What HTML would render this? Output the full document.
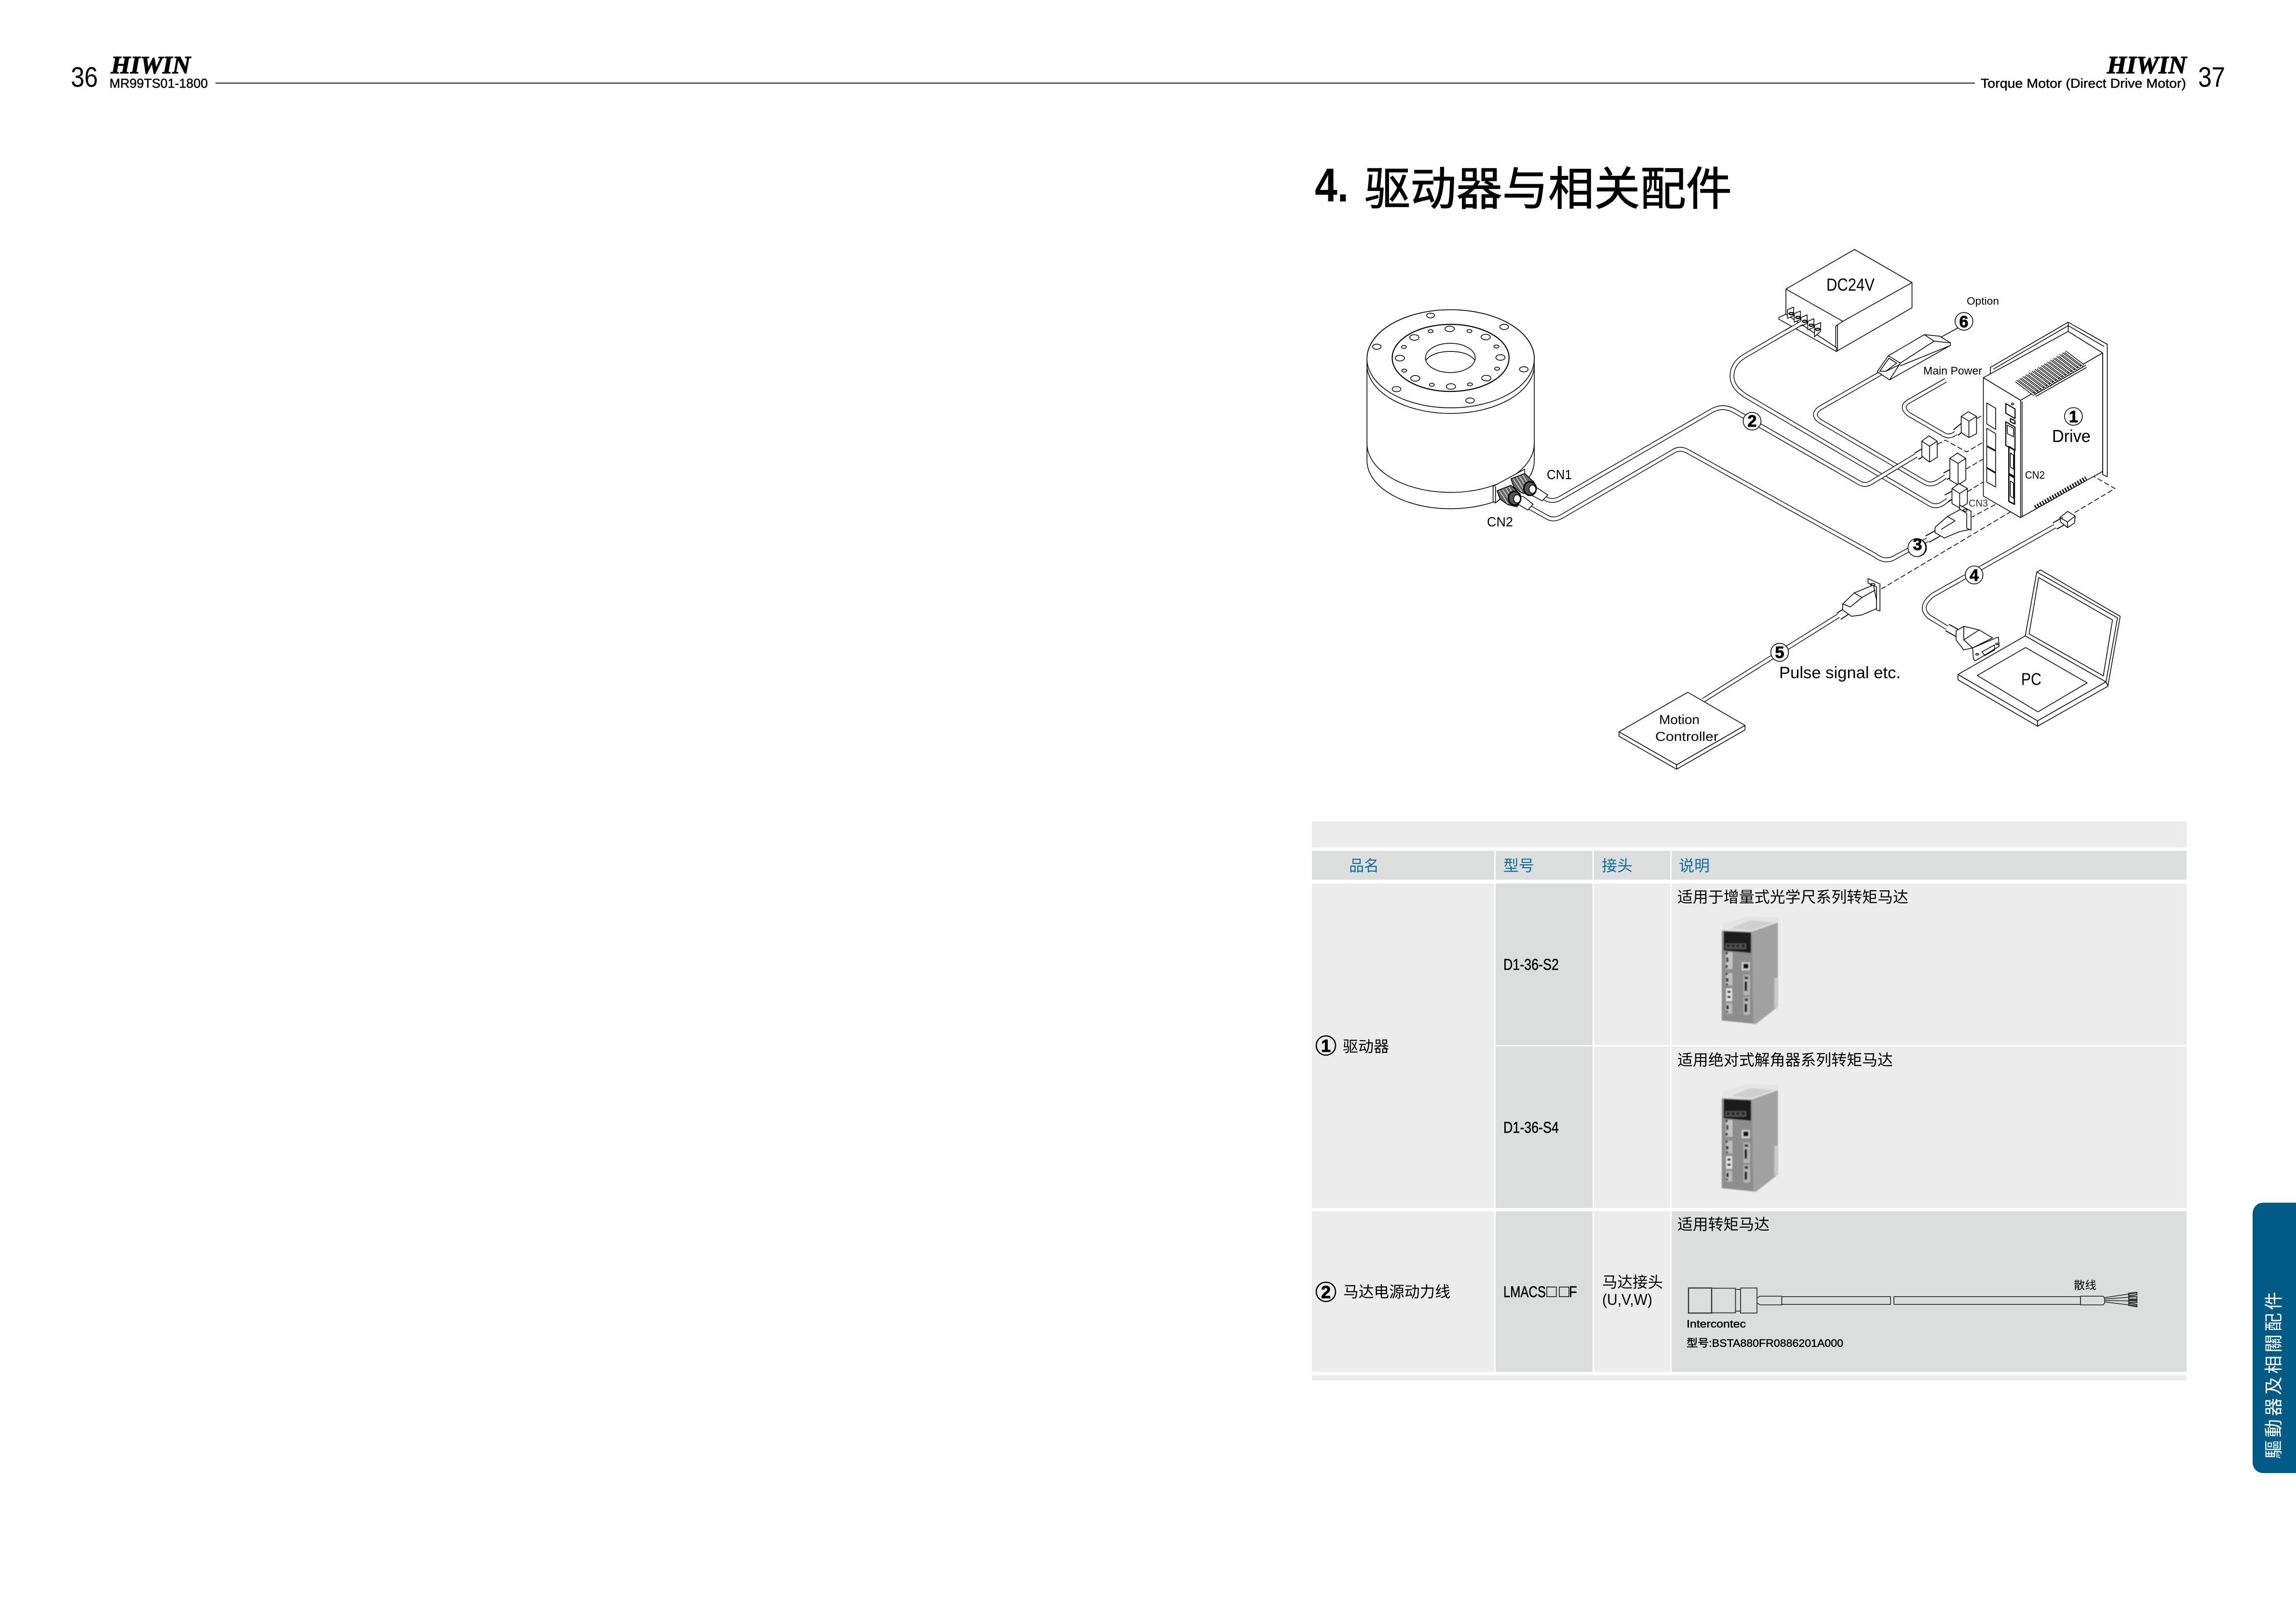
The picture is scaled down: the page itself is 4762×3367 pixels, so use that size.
<!DOCTYPE html>
<html lang="zh"><head><meta charset="utf-8"><title>HIWIN Torque Motor</title>
<style>
html,body{margin:0;padding:0;background:#fff;width:4762px;height:3367px;overflow:hidden}
svg{display:block}
text{font-family:"Liberation Sans","Noto Sans CJK SC",sans-serif;fill:#000}
.n,.v *{vector-effect:non-scaling-stroke}
.v{fill:none;stroke:#000;stroke-width:1.6;stroke-linejoin:round}
.w{fill:#fff}
.m{stroke:#000;stroke-width:.5}
.num{font-weight:700;text-anchor:middle;stroke:#000;stroke-width:1}
.logo{font-family:"Liberation Serif",serif;font-weight:700;font-style:italic;stroke:#000;stroke-width:1.3}
</style></head><body>
<svg xmlns="http://www.w3.org/2000/svg" width="4762" height="3367" viewBox="0 0 4762 3367">
<defs>
<filter id="b" x="-5%" y="-5%" width="110%" height="110%"><feGaussianBlur stdDeviation="3"/></filter>
<path id="cA" class="n" d="M790,1240 Q815,1262 843,1238 L1335,832 Q1370,805 1408,835 L1809,1165 Q1832,1187 1854,1165 L1999,1040"/>
<path id="cB" class="n" d="M735,1278 L800,1330 Q820,1345 845,1325 L1205,1025 Q1230,1000 1258,1025 L1864,1505 Q1899,1545 1935,1510 L2050,1422"/>
<path id="cC" class="n" d="M1619,430 L1439,580 Q1399,615 1399,672 Q1399,725 1444,765 L2039,1265 Q2062,1285 2084,1265 L2114,1235"/>
<path id="cD" class="n" d="M1894,650 L1684,822 Q1654,855 1689,885 L2024,1165 Q2044,1182 2066,1165 L2099,1135"/>
<path id="cM" class="n" d="M2094,692 L1974,790 Q1944,815 1974,850 L2089,945 Q2106,958 2124,940 L2149,915"/>
<path id="c4" class="n" d="M1335,218 L1015,565 Q975,625 1005,675 L1065,745"/>
<path id="c5" class="n" d="M785,650 L417,1092"/>
<path id="fins" class="n" d="M1068,695l60,65M1078,686.5l60,65M1088,678l60,65M1098,669.5l60,65M1108,661l60,65M1118,652.5l60,65M1128,644l60,65M1138,635.5l60,65M1148,627l60,65M1158,618.5l60,65M1168,610l60,65M1178,601.5l60,65M1188,593l60,65M1198,584.5l60,65M1208,576l60,65M1218,567.5l60,65M1228,559l60,65"/>
<g id="photo" transform="translate(3450,2150) scale(.3333)">
 <g filter="url(#b)">
 <polygon points="372,345 520,295 715,305 712,345 548,395 365,385" fill="#e4e4e4"/>
 <polygon points="420,372 540,322 690,335 545,385" fill="#cfcfcf"/>
 <polygon points="548,393 712,335 712,860 575,968 555,965" fill="#a2a2a2"/>
 <polygon points="690,680 710,680 710,860 690,870" fill="#c9c9c9"/>
 <polygon points="363,385 550,393 560,965 363,945" fill="#8d8d8d"/>
 <polygon points="375,390 545,398 545,525 375,510" fill="#1d1d1d"/>
 <rect x="385" y="465" width="130" height="35" fill="#555"/>
 <rect x="395" y="472" width="18" height="18" fill="#222"/><rect x="425" y="472" width="18" height="18" fill="#222"/><rect x="455" y="472" width="18" height="18" fill="#222"/><rect x="487" y="472" width="18" height="18" fill="#222"/>
 <rect x="388" y="520" width="42" height="105" fill="#c4c4c4"/><rect x="392" y="552" width="12" height="30" fill="#222"/><rect x="388" y="520" width="12" height="14" fill="#222"/><rect x="388" y="600" width="12" height="18" fill="#222"/>
 <rect x="388" y="650" width="42" height="78" fill="#bdbdbd"/><rect x="390" y="682" width="14" height="22" fill="#222"/><rect x="388" y="650" width="12" height="12" fill="#222"/><rect x="390" y="715" width="12" height="12" fill="#222"/>
 <rect x="390" y="745" width="38" height="80" fill="#e2e2e2"/><rect x="398" y="760" width="20" height="14" fill="#333"/><rect x="398" y="792" width="20" height="14" fill="#333"/>
 <rect x="388" y="838" width="40" height="65" fill="#bdbdbd"/><rect x="392" y="850" width="14" height="26" fill="#222"/><rect x="390" y="885" width="12" height="12" fill="#222"/>
 <rect x="487" y="583" width="50" height="50" fill="#d5d5d5"/><rect x="497" y="592" width="32" height="30" fill="#111"/>
 <rect x="498" y="662" width="40" height="125" fill="#b5b5b5"/><rect x="505" y="702" width="16" height="60" fill="#222"/><rect x="505" y="672" width="22" height="16" fill="#333"/>
 <rect x="498" y="800" width="40" height="110" fill="#b5b5b5"/><rect x="505" y="842" width="16" height="50" fill="#222"/><rect x="505" y="808" width="22" height="16" fill="#333"/>
 </g>
</g>
</defs>

<!-- page header -->
<text x="147" y="180" font-size="58" textLength="56" lengthAdjust="spacingAndGlyphs">36</text>
<text class="logo" x="230" y="152" font-size="52" textLength="165" lengthAdjust="spacingAndGlyphs">HIWIN</text>
<text class="m" x="227" y="182" font-size="27" textLength="204" lengthAdjust="spacingAndGlyphs">MR99TS01-1800</text>
<rect x="447" y="171" width="3649" height="3" fill="#5e5e5e"/>
<text class="m" x="4108" y="182" font-size="27" textLength="426" lengthAdjust="spacingAndGlyphs">Torque Motor (Direct Drive Motor)</text>
<text class="logo" x="4370" y="152" font-size="52" textLength="165" lengthAdjust="spacingAndGlyphs">HIWIN</text>
<text x="4559" y="180" font-size="58" textLength="56" lengthAdjust="spacingAndGlyphs">37</text>

<!-- title -->
<text x="2727" y="418" font-size="98" font-weight="700" textLength="70" lengthAdjust="spacingAndGlyphs">4.</text>
<text x="2830" y="425" font-size="95" textLength="762" lengthAdjust="spacingAndGlyphs" stroke="#000" stroke-width="1.2">驱动器与相关配件</text>

<!-- diagram -->
<g class="v" transform="translate(2700,480) scale(.63776,.44643)">
 <!-- motor -->
 <path class="w" d="M212,590 V1065 A272,224 0 0 0 756,1065 V590 A272,226 0 0 0 212,590Z"/>
 <ellipse cx="484" cy="592" rx="272" ry="228"/>
 <path d="M212,620 A272,226 0 0 0 756,620 M212,985 A272,228 0 0 0 756,985"/>
 <ellipse cx="484" cy="588" rx="190" ry="156" stroke-width="2.2"/>
 <ellipse cx="483" cy="588" rx="81" ry="68"/>
 <path d="M402,600 C420,570 450,558 483,558 C520,558 548,572 564,600"/>
 <ellipse cx="419" cy="391" rx="13" ry="11"/><ellipse cx="658" cy="444" rx="14" ry="12"/><ellipse cx="244" cy="536" rx="14" ry="12"/><ellipse cx="722" cy="641" rx="14" ry="12"/><ellipse cx="308" cy="733" rx="14" ry="12"/><ellipse cx="547" cy="786" rx="14" ry="12"/>
 <ellipse cx="481" cy="453" rx="15" ry="13"/><ellipse cx="366" cy="493" rx="15" ry="13"/><ellipse cx="598" cy="491" rx="15" ry="13"/><ellipse cx="319" cy="589" rx="15" ry="13"/><ellipse cx="646" cy="586" rx="15" ry="13"/><ellipse cx="369" cy="683" rx="15" ry="13"/><ellipse cx="600" cy="682" rx="15" ry="13"/><ellipse cx="485" cy="721" rx="15" ry="13"/>
 <ellipse cx="419" cy="464" rx="8" ry="7"/><ellipse cx="545" cy="463" rx="8" ry="7"/><ellipse cx="332" cy="537" rx="8" ry="7"/><ellipse cx="633" cy="535" rx="8" ry="7"/><ellipse cx="333" cy="647" rx="8" ry="7"/><ellipse cx="635" cy="638" rx="8" ry="7"/><ellipse cx="423" cy="713" rx="8" ry="7"/><ellipse cx="547" cy="711" rx="8" ry="7"/>

 <!-- cables -->
 <use href="#cB" stroke-width="9.5"/><use href="#cB" stroke="#fff" stroke-width="6.6"/>
 <use href="#cD" stroke-width="9.5"/><use href="#cD" stroke="#fff" stroke-width="6.6"/>
 <use href="#cC" stroke-width="9.5"/><use href="#cC" stroke="#fff" stroke-width="6.6"/>
 <use href="#cM" stroke-width="9.5"/><use href="#cM" stroke="#fff" stroke-width="6.6"/>
 <use href="#cA" stroke-width="9.5"/><use href="#cA" stroke="#fff" stroke-width="6.6"/>

 <!-- motor connectors -->
 <path class="w" d="M622,1185 L725,1105 V1130 L680,1200 L630,1262 L622,1255Z"/>
 <path d="M630,1185 V1262"/>
 <polygon fill="#666" points="680,1150 725,1125 755,1165 760,1195 745,1225 715,1215 690,1190"/>
 <path stroke="#ddd" stroke-width="1.6" d="M688,1150 L716,1212 M698,1144 L726,1207 M708,1138 L736,1202 M718,1132 L746,1196"/>
 <polygon class="w" points="750,1192 765,1192 800,1225 782,1252 745,1225"/>
 <ellipse fill="#555" cx="742" cy="1195" rx="20" ry="32" stroke-width="3"/>
 <ellipse class="w" cx="750" cy="1198" rx="11" ry="19"/>
 <polygon fill="#666" points="635,1205 680,1180 710,1220 715,1250 700,1280 670,1270 645,1245"/>
 <path stroke="#ddd" stroke-width="1.6" d="M643,1205 L671,1267 M653,1199 L681,1262 M663,1193 L691,1257 M673,1187 L701,1251"/>
 <polygon class="w" points="705,1232 720,1232 752,1268 735,1295 700,1265"/>
 <ellipse fill="#555" cx="692" cy="1240" rx="20" ry="32" stroke-width="3"/>
 <ellipse class="w" cx="700" cy="1243" rx="11" ry="19"/>

 <!-- z4 coordinate space -->
 <g transform="translate(1254.4,0)">
  <!-- DC24V -->
  <polygon class="w" points="320,268 543,84 730,238 730,355 484,558 484,540 320,400"/>
  <path d="M320,268 L505,418 L730,238 M505,418 L482,440 V558 M488,436 V554"/>
  <path class="w" d="M297,400 L320,385 L484,540 V558 L297,408Z"/>
  <path class="w" d="M325,364 L345,352 V392 L325,404Z M347,382 L367,370 V410 L347,422Z M369,400 L389,388 V428 L369,440Z M391,418 L411,406 V446 L391,458Z M413,436 L433,424 V464 L413,490Z"/>
  <g stroke-width="2.4"><ellipse cx="337" cy="382" rx="7" ry="5"/><ellipse cx="359" cy="400" rx="7" ry="5"/><ellipse cx="381" cy="418" rx="7" ry="5"/><ellipse cx="403" cy="436" rx="7" ry="5"/><ellipse cx="423" cy="455" rx="7" ry="5"/></g>
  <path class="n" d="M372,425 L320,468" stroke-width="9.5"/><path class="n" d="M374,423 L320,468" stroke="#fff" stroke-width="6.6"/>

  <!-- filter 6 -->
  <path d="M820,495 L880,448"/>
  <polygon class="w" points="770,480 820,487 855,518 855,530 657,690 617,652 653,578"/>
  <path d="M653,578 L692,612 L802,510 L770,480 M802,510 L855,518 M692,612 L657,690 M692,625 L855,530"/>
  <path class="w" d="M655,590 L680,612 L645,650 L625,650Z"/>
  <path d="M645,650 L692,618"/>

  <!-- dashed -->
  <g stroke-dasharray="11 5">
   <path d="M940,870 L1000,822 M812,990 L838,970 L908,1025 L990,955 M905,1105 L990,1035 M910,1210 L990,1140"/>
   <path d="M1050,845 L1007,880 L1390,1195 L1255,1310"/>
   <path d="M1045,1080 L1015,1108 L1148,1220 L630,1662"/>
   <path d="M1045,1235 L925,1328"/>
  </g>

  <!-- drive -->
  <polygon class="w" points="985,632 1238,422 1365,525 1365,1140 1350,1130 1350,565 1238,470 985,680"/>
  <path d="M995,640 L1238,438 L1355,535 M1238,422 V470 M1350,565 V1128"/>
  <polygon class="w" points="962,680 1238,465 1350,565 1083,785"/>
  <polygon class="w" points="1083,785 1350,565 1350,1115 1083,1330"/>
  <polygon class="w" points="962,680 1083,785 1083,1330 962,1230"/>
  <path d="M1088,790 V1326"/>
  <use href="#fins" stroke-width="5.5"/><use href="#fins" stroke="#fff" stroke-width="2.6"/>
  <path d="M1128,760 L1296,622 M1132,768 L1298,632"/>
  <path class="n" d="M1130,1282 L1296,1146" stroke-width="8" stroke-dasharray="3 3"/>
  <path class="n" d="M1134,1280 L1298,1146" stroke="#fff" stroke-width="3" stroke-dasharray="3 3"/>
  <path d="M973,797 L1002,822 V920 L973,895Z M973,915 L1002,940 V1018 L973,995Z M973,1000 L1002,1022 V1120 L973,1097Z M973,1100 L1002,1125 V1188 L973,1165Z"/>
  <path stroke-width="2.2" d="M1035,800 L1065,825 V870 L1035,845Z M1050,870 L1065,880 V895 L1050,885Z M1035,885 L1065,910 V1018 L1035,995Z"/>
  <path d="M1040,900 L1060,915 V955 L1040,940Z"/>
  <path stroke-width="2.6" d="M1045,1000 L1063,1015 V1140 L1045,1125Z M1045,1130 L1063,1145 V1268 L1045,1255Z"/>
  <path d="M1050,1030 L1060,1040 V1105 L1050,1095Z M1050,1160 L1060,1170 V1240 L1050,1230Z"/>
  <ellipse cx="1057" cy="802" rx="4" ry="4"/>

  <!-- connector blocks -->
  <path class="n" d="M872,935 L898,905" stroke-width="17"/><path class="n" d="M872,935 L898,905" stroke="#fff" stroke-width="13"/>
  <path class="w" d="M890,860 L913,838 L940,860 V940 L915,958 L890,935Z M890,860 L915,882 L940,860 M915,882 V958"/>
  <path class="n" d="M745,1045 L772,1022" stroke-width="17"/><path class="n" d="M745,1045 L772,1022" stroke="#fff" stroke-width="13"/>
  <path class="w" d="M762,975 L785,950 L812,975 V1050 L787,1072 L762,1045Z M762,975 L787,998 L812,975 M787,998 V1072"/>
  <path class="n" d="M838,1138 L868,1115" stroke-width="17"/><path class="n" d="M838,1138 L868,1115" stroke="#fff" stroke-width="13"/>
  <path class="w" d="M853,1055 L878,1030 L905,1055 V1155 L880,1178 L853,1155Z M853,1055 L880,1078 L905,1055 M880,1078 V1178"/>
  <path class="n" d="M842,1240 L875,1215" stroke-width="17"/><path class="n" d="M842,1240 L875,1215" stroke="#fff" stroke-width="13"/>
  <path class="w" d="M860,1195 L883,1172 L910,1195 V1265 L885,1285 L860,1265Z M860,1195 L885,1218 L910,1195 M885,1218 V1285"/>

  <!-- connector 3 -->
  <path class="n" d="M780,1430 L815,1402" stroke-width="17"/><path class="n" d="M780,1430 L815,1402" stroke="#fff" stroke-width="13"/>
  <path class="w" d="M805,1375 L845,1325 L890,1290 L915,1310 L920,1385 L885,1395 L835,1425 L805,1400Z"/>
  <path class="w" d="M885,1272 L922,1300 V1388 L908,1380 V1310 L885,1290Z"/>
  <path d="M845,1325 L870,1345 L825,1385"/>
  <ellipse cx="903" cy="1296" rx="6" ry="5"/>

  <!-- callouts -->
  <ellipse class="w" cx="1255" cy="860" rx="29" ry="41"/><ellipse class="w" cx="210" cy="882" rx="29" ry="41"/><ellipse class="w" cx="748" cy="1470" rx="29" ry="41"/><ellipse class="w" cx="899" cy="418" rx="29" ry="41"/>
 </g>
</g>

<g class="v" transform="translate(3200,1000) scale(.79719,.41459)">
 <!-- pc connector at drive -->
 <use href="#c4" stroke-width="9.5"/><use href="#c4" stroke="#fff" stroke-width="6.6"/>
 <use href="#c5" stroke-width="9.5"/><use href="#c5" stroke="#fff" stroke-width="6.6"/>
 <path class="n" d="M1332,220 L1358,192" stroke-width="17"/><path class="n" d="M1332,220 L1358,192" stroke="#fff" stroke-width="13"/>
 <path class="w" d="M1345,178 L1365,147 L1385,170 L1383,205 L1365,228 L1347,200Z M1345,178 L1365,200 L1385,170 M1365,200 V228"/>

 <!-- 5 connector -->
 <path class="n" d="M770,672 L795,640" stroke-width="17"/><path class="n" d="M770,672 L795,640" stroke="#fff" stroke-width="13"/>
 <path class="w" d="M780,610 L810,555 L860,515 L872,630 L830,665 L803,672 L780,640Z"/>
 <path class="w" d="M846,483 L877,510 V645 L868,640 V525 L846,505Z"/>
 <path d="M810,555 L830,578 L800,625 L780,610 M830,578 L865,540"/>
 <ellipse cx="858" cy="512" rx="6" ry="5"/>

 <!-- 4 connector -->
 <path class="n" d="M1052,728 L1082,760" stroke-width="17"/><path class="n" d="M1052,728 L1082,760" stroke="#fff" stroke-width="13"/>
 <path class="w" d="M1075,745 L1095,722 L1135,740 L1170,780 L1118,830 L1095,840 L1075,790Z"/>
 <path class="w" d="M1118,830 L1185,775 L1187,822 L1125,895 L1120,885Z"/>
 <path d="M1095,722 L1095,790 L1135,740 M1095,790 L1118,830"/>
 <path d="M1142,850 L1175,815 V840 L1150,868Z"/>
 <ellipse cx="1130" cy="862" rx="4" ry="4"/><ellipse cx="1182" cy="810" rx="4" ry="4"/>

 <!-- laptop -->
 <path class="w" d="M1255,770 L1285,450 L1295,440 L1502,672 L1470,1020 L1465,1000Z"/>
 <path d="M1285,450 L1495,680 L1465,1000"/>
 <path d="M1265,760 L1290,478 L1482,690 L1458,970Z"/>
 <path class="w" d="M1080,963 L1255,770 L1465,1000 L1287,1195Z"/>
 <path class="w" d="M1080,963 V990 L1287,1222 V1195Z"/>
 <path class="w" d="M1287,1195 L1465,1000 L1470,1022 L1287,1222Z"/>
 <path d="M1130,968 L1256,828 L1416,1005 L1288,1150Z"/>

 <!-- motion controller -->
 <path class="w" d="M377,1052 L526,1218 L348,1415 L198,1250Z"/>
 <path class="w" d="M198,1250 V1272 L348,1437 V1415Z"/>
 <path class="w" d="M348,1415 L526,1218 V1240 L348,1437Z"/>

 <ellipse class="w" cx="1122" cy="465" rx="23" ry="45"/><ellipse class="w" cx="616" cy="852" rx="23" ry="45"/><ellipse class="w" cx="973" cy="328" rx="23" ry="45"/>
</g>

<!-- diagram labels -->
<text x="3788" y="603" font-size="36" textLength="100" lengthAdjust="spacingAndGlyphs">DC24V</text>
<text x="4079" y="632" font-size="22" textLength="67" lengthAdjust="spacingAndGlyphs">Option</text>
<text x="3989" y="777" font-size="23" textLength="122" lengthAdjust="spacingAndGlyphs">Main Power</text>
<text x="4200" y="993" font-size="22" textLength="41" lengthAdjust="spacingAndGlyphs">CN2</text>
<text x="4083" y="1051" font-size="21" textLength="40" lengthAdjust="spacingAndGlyphs" style="fill:#333">CN3</text>
<text x="4256" y="917" font-size="36" textLength="80" lengthAdjust="spacingAndGlyphs">Drive</text>
<text x="3208" y="994" font-size="28" textLength="52" lengthAdjust="spacingAndGlyphs">CN1</text>
<text x="3084" y="1092" font-size="28" textLength="54" lengthAdjust="spacingAndGlyphs">CN2</text>
<text x="3441" y="1502" font-size="27" textLength="84" lengthAdjust="spacingAndGlyphs">Motion</text>
<text x="3433" y="1537" font-size="27" textLength="131" lengthAdjust="spacingAndGlyphs">Controller</text>
<text x="3690" y="1407" font-size="34" textLength="252" lengthAdjust="spacingAndGlyphs">Pulse signal etc.</text>
<text x="4192" y="1421" font-size="35" textLength="42" lengthAdjust="spacingAndGlyphs">PC</text>
<text class="num" x="4300.5" y="876" font-size="34">1</text>
<text class="num" x="3634" y="885" font-size="34">2</text>
<text class="num" x="3977" y="1141" font-size="34">3</text>
<text class="num" x="4094.5" y="1205" font-size="34">4</text>
<text class="num" x="3691" y="1365" font-size="34">5</text>
<text class="num" x="4073" y="679" font-size="34">6</text>

<!-- table -->
<rect x="2721" y="1704" width="1814" height="54" fill="#ececec"/>
<g fill="#dcdddd">
<rect x="2721" y="1765" width="378" height="60"/><rect x="3102" y="1765" width="201" height="60"/><rect x="3306" y="1765" width="158" height="60"/><rect x="3467" y="1765" width="1068" height="60"/>
<rect x="3102" y="1833" width="201" height="335"/><rect x="3102" y="2171" width="201" height="335"/><rect x="3102" y="2513" width="201" height="333"/>
<rect x="3467" y="2513" width="1068" height="333"/>
</g>
<g fill="#ececec">
<rect x="2721" y="1833" width="378" height="673"/>
<rect x="3306" y="1833" width="158" height="335"/><rect x="3467" y="1833" width="1068" height="335"/>
<rect x="3306" y="2171" width="158" height="335"/><rect x="3467" y="2171" width="1068" height="335"/>
<rect x="2721" y="2513" width="378" height="333"/><rect x="3306" y="2513" width="158" height="333"/>
<rect x="2721" y="2853" width="1814" height="11"/>
</g>

<text x="2798" y="1807" font-size="32" textLength="62" lengthAdjust="spacingAndGlyphs" style="fill:#0b6d9b">品名</text>
<text x="3118" y="1807" font-size="32" textLength="64" lengthAdjust="spacingAndGlyphs" style="fill:#0b6d9b">型号</text>
<text x="3322" y="1807" font-size="32" textLength="64" lengthAdjust="spacingAndGlyphs" style="fill:#0b6d9b">接头</text>
<text x="3482" y="1807" font-size="32" textLength="64" lengthAdjust="spacingAndGlyphs" style="fill:#0b6d9b">说明</text>

<circle cx="2750" cy="2169" r="20" fill="none" stroke="#000" stroke-width="2.6"/>
<text class="num" x="2750" y="2182" font-size="36">1</text>
<text x="2785" y="2182" font-size="32" textLength="96" lengthAdjust="spacingAndGlyphs">驱动器</text>
<circle cx="2750" cy="2680" r="20" fill="none" stroke="#000" stroke-width="2.6"/>
<text class="num" x="2750" y="2693" font-size="36">2</text>
<text x="2786" y="2691" font-size="32" textLength="222" lengthAdjust="spacingAndGlyphs">马达电源动力线</text>

<text class="m" x="3118" y="2012" font-size="32" textLength="115" lengthAdjust="spacingAndGlyphs">D1-36-S2</text>
<text class="m" x="3118" y="2350" font-size="32" textLength="115" lengthAdjust="spacingAndGlyphs">D1-36-S4</text>
<text class="m" x="3118" y="2691" font-size="32" textLength="88" lengthAdjust="spacingAndGlyphs">LMACS</text>
<text class="m" x="3205" y="2690" font-size="26" style="font-family:'Noto Sans CJK SC',sans-serif">□□</text>
<text class="m" x="3254" y="2691" font-size="32" textLength="17" lengthAdjust="spacingAndGlyphs">F</text>
<text x="3323" y="2671" font-size="32" textLength="126" lengthAdjust="spacingAndGlyphs">马达接头</text>
<text x="3323" y="2707" font-size="32" textLength="104" lengthAdjust="spacingAndGlyphs">(U,V,W)</text>

<text x="3479" y="1872" font-size="32" textLength="479" lengthAdjust="spacingAndGlyphs">适用于增量式光学尺系列转矩马达</text>
<text x="3479" y="2210" font-size="32" textLength="447" lengthAdjust="spacingAndGlyphs">适用绝对式解角器系列转矩马达</text>
<text x="3479" y="2551" font-size="32" textLength="191" lengthAdjust="spacingAndGlyphs">适用转矩马达</text>

<use href="#photo" transform="translate(0,-348)"/>
<use href="#photo"/>

<!-- cable drawing -->
<g fill="none" stroke="#333" stroke-width="1.8">
 <rect x="3502" y="2672" width="48" height="52" stroke-width="2.4"/>
 <rect x="3550" y="2672.5" width="49.5" height="51"/>
 <rect x="3599.5" y="2675" width="10.5" height="45"/>
 <rect x="3610" y="2672" width="34" height="52"/>
 <path d="M3644,2693 L3650,2689 H3695.5 V2707 H3650 L3644,2703"/>
 <rect x="3695.5" y="2690" width="225.5" height="16"/>
 <rect x="3928" y="2690" width="387" height="16"/>
 <path d="M4315,2689 H4362 L4365,2693 V2703 L4362,2707 H4315Z"/>
 <path d="M4365,2692 L4432,2682 M4365,2695 L4432,2690 M4365,2698 L4432,2699 M4365,2701 L4432,2709"/>
 <path stroke-width="2.2" d="M4415,2683 L4432,2681 V2686 L4415,2688Z M4415,2690 H4432 V2695 H4415Z M4415,2697 H4432 V2702 H4415Z M4415,2704 L4432,2706 V2711 L4415,2708Z"/>
</g>
<text x="4301" y="2674" font-size="23" textLength="47" lengthAdjust="spacingAndGlyphs">散线</text>
<text class="m" x="3498" y="2754" font-size="22" textLength="123" lengthAdjust="spacingAndGlyphs">Intercontec</text>
<text class="m" x="3498" y="2794" font-size="22" textLength="325" lengthAdjust="spacingAndGlyphs">型号:BSTA880FR0886201A000</text>

<!-- side tab -->
<path d="M4762,2495 H4694 A22,22 0 0 0 4672,2517 V3034 A22,22 0 0 0 4694,3056 H4762Z" fill="#025b86"/>
<text transform="translate(4729,3026) rotate(-90)" font-size="38" textLength="346" lengthAdjust="spacing" style="fill:#fff;font-family:'Liberation Sans','Noto Sans CJK TC',sans-serif">驅動器及相關配件</text>
</svg>
</body></html>
